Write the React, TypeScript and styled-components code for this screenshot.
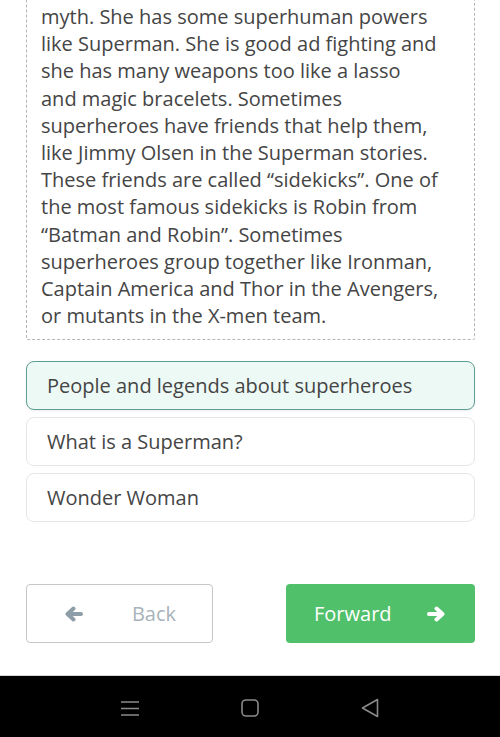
import styled, { createGlobalStyle } from "styled-components"

const GlobalStyle = createGlobalStyle`
  html, body {
    margin: 0;
    padding: 0;
    background: #ffffff;
    overflow: hidden;
  }
  * {
    box-sizing: border-box;
  }
`

const lines = [
  "myth. She has some superhuman powers",
  "like Superman. She is good ad fighting and",
  "she has many weapons too like a lasso",
  "and magic bracelets. Sometimes",
  "superheroes have friends that help them,",
  "like Jimmy Olsen in the Superman stories.",
  "These friends are called \u201csidekicks\u201d. One of",
  "the most famous sidekicks is Robin from",
  "\u201cBatman and Robin\u201d. Sometimes",
  "superheroes group together like Ironman,",
  "Captain America and Thor in the Avengers,",
  "or mutants in the X-men team.",
]

const answers = [
  { label: "People and legends about superheroes", selected: true },
  { label: "What is a Superman?", selected: false },
  { label: "Wonder Woman", selected: false },
]

// chunky arrow, pointing right; flipped for back
function Arrow({ color, flip }: { color: string; flip?: boolean }) {
  return (
    <svg
      width="20"
      height="16"
      viewBox="0 0 20 16"
      style={flip ? { transform: "scaleX(-1)" } : undefined}
    >
      <path
        d="M3 8h13M10.5 2.5L16.5 8l-6 5.5"
        fill="none"
        stroke={color}
        strokeWidth="4"
        strokeLinecap="round"
        strokeLinejoin="round"
      />
    </svg>
  )
}

export default function App() {
  return (
    <Screen>
      <GlobalStyle />
      <Content>
        <TextBox>
          {lines.map((l, i) => (
            <Line key={i}>{l}</Line>
          ))}
        </TextBox>
        <Answers>
          {answers.map((a) => (
            <Answer key={a.label} $selected={a.selected}>
              {a.label}
            </Answer>
          ))}
        </Answers>
        <Controls>
          <BackButton>
            <Arrow color="#8e9ea9" flip />
            <span>Back</span>
          </BackButton>
          <ForwardButton>
            <span>Forward</span>
            <Arrow color="#ffffff" />
          </ForwardButton>
        </Controls>
      </Content>
      <NavBar>
        <NavIcon>
          <svg width="20" height="18" viewBox="0 0 20 18">
            <path d="M1 3h18M1 9.5h18M1 16h18" stroke="#8a8a8a" strokeWidth="1.4" />
          </svg>
        </NavIcon>
        <NavIcon>
          <svg width="18" height="18" viewBox="0 0 18 18">
            <rect x="1" y="1" width="16" height="16" rx="4" fill="none" stroke="#8a8a8a" strokeWidth="1.6" />
          </svg>
        </NavIcon>
        <NavIcon>
          <svg width="18" height="20" viewBox="0 0 18 20">
            <path d="M16.5 1.5 L1.5 10 L16.5 18.5 Z" fill="none" stroke="#8a8a8a" strokeWidth="1.6" strokeLinejoin="round" />
          </svg>
        </NavIcon>
      </NavBar>
    </Screen>
  )
}

const Screen = styled.div`
  width: 500px;
  height: 737px;
  display: flex;
  flex-direction: column;
  overflow: hidden;
  font-family: "Open Sans", "Liberation Sans", sans-serif;
  color: #444444;
`

const Content = styled.div`
  flex: 1;
  display: flex;
  flex-direction: column;
  padding: 0 25px 0 26px;
  border-bottom: 1px solid #d8d8d8;
`

const TextBox = styled.div`
  margin-top: -12px;
  border: 1px dashed #b5b5b5;
  border-radius: 2px;
  padding: 14px 10px 10px 14px;
`

const Line = styled.div`
  font-size: 20px;
  line-height: 27.2px;
  white-space: nowrap;
  color: #454545;
`

const Answers = styled.div`
  margin-top: 21px;
  display: flex;
  flex-direction: column;
  gap: 7px;
`

const Answer = styled.div<{ $selected: boolean }>`
  height: 49px;
  display: flex;
  align-items: center;
  padding-left: 20px;
  font-size: 20px;
  color: #454545;
  border-radius: 8px;
  border: 1px solid ${(p) => (p.$selected ? "#5f9f93" : "#e6e6e6")};
  background: ${(p) => (p.$selected ? "#edf9f4" : "#ffffff")};
  box-shadow: ${(p) => (p.$selected ? "0 1px 2px rgba(0,0,0,0.08)" : "none")};
`

const Controls = styled.div`
  margin-top: 62px;
  display: flex;
  justify-content: space-between;
`

const ButtonBase = styled.div`
  height: 59px;
  display: flex;
  align-items: center;
  justify-content: space-between;
  font-size: 20px;
  border-radius: 4px;
`

const BackButton = styled(ButtonBase)`
  width: 187px;
  padding: 0 36px 0 37px;
  border: 1.5px solid #c3c7ca;
  color: #a8b3bb;
`

const ForwardButton = styled(ButtonBase)`
  width: 189px;
  padding: 0 29px 0 28px;
  background: #50c06a;
  color: #ffffff;
`

const NavBar = styled.div`
  height: 61px;
  flex-shrink: 0;
  background: #000000;
  display: flex;
  align-items: center;
  justify-content: center;
  gap: 100px;
  padding-top: 2px;
`

const NavIcon = styled.div`
  width: 20px;
  display: flex;
  justify-content: center;
  align-items: center;
`
